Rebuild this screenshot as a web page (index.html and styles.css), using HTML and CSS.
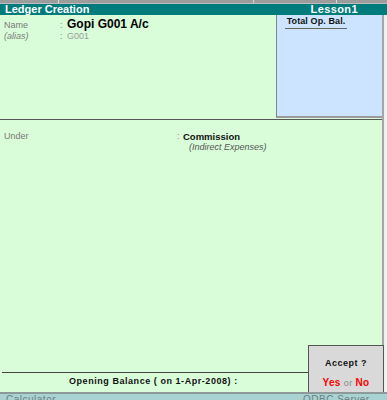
FILE: index.html
```html
<!DOCTYPE html>
<html>
<head>
<meta charset="utf-8">
<link rel="stylesheet" href="styles.css">
</head>
<body>
<div class="screen">
  <div class="topstrip"><span class="sep s1"></span><span class="sep s2"></span><span class="sep s3"></span></div>
  <div class="titlebar"><span>Ledger Creation</span><span class="company">Lesson1</span></div>
  <div class="main">
    <div class="content">
      <div class="upper">
        <div class="fields">
          <div class="row first"><span class="lbl">Name</span><span class="colon">:</span><span class="val-big">Gopi G001 A/c</span></div>
          <div class="row alias"><span class="lbl ital">(alias)</span><span class="colon">:</span><span class="val-gray">G001</span></div>
        </div>
        <div class="balpanel">
          <div class="balhead">Total Op. Bal.</div>
        </div>
      </div>
      <div class="divider"></div>
      <div class="under">
        <span class="lbl ulbl">Under</span>
        <span class="colon">:</span>
        <div class="group">
          <div class="gname">Commission</div>
          <div class="gparent">(Indirect Expenses)</div>
        </div>
      </div>
      <div class="spacer"></div>
      <div class="footer">
        <div class="footline"></div>
        <div class="opbal">Opening Balance ( on 1-Apr-2008) :</div>
      </div>
      <div class="accept">
        <div class="acc-q">Accept ?</div>
        <div class="acc-a"><span class="red">Yes</span> <span class="or">or</span> <span class="red">No</span></div>
      </div>
    </div>
    <div class="edge"></div>
  </div>
  <div class="bottomstrip"><span>Calculator</span><span class="odbc">ODBC Server</span></div>
</div>
</body>
</html>
```
FILE: styles.css
```css
* { box-sizing: border-box; }
html, body { margin: 0; padding: 0; }
body {
  width: 387px;
  height: 400px;
  overflow: hidden;
  font-family: "Liberation Sans", Arial, sans-serif;
  background: #ffffff;
}
.screen {
  width: 387px;
  height: 400px;
  display: flex;
  flex-direction: column;
}
.topstrip {
  height: 4px;
  background: #9c9c9c;
  position: relative;
  border-bottom: 1px solid #bdbdbd;
}
.sep { position: absolute; top: 0; width: 1px; height: 3px; background: #d8d8d8; }
.s1 { left: 58px; }
.s2 { left: 253px; }
.s3 { left: 336px; }
.titlebar {
  height: 11px;
  background: #007b7b;
  color: #ffffff;
  font-weight: bold;
  font-size: 11px;
  line-height: 11px;
  display: flex;
  justify-content: space-between;
  padding: 0 29px 0 5px;
}
.company { letter-spacing: 0.4px; }
.main {
  flex: 1;
  display: flex;
  min-height: 0;
}
.content {
  width: 382px;
  background: #d9fdd9;
  display: flex;
  flex-direction: column;
  position: relative;
}
.edge {
  width: 5px;
  border-left: 2px solid #a6a6a6;
  background: #eef2ee;
}
.upper {
  height: 103px;
  display: flex;
}
.fields {
  flex: 1;
  padding: 3px 0 0 4px;
}
.row {
  display: flex;
  align-items: baseline;
  height: 11px;
  line-height: 11px;
}
.first { height: 13px; line-height: 13px; }
.lbl {
  width: 56px;
  font-size: 9px;
  color: #7a7a7a;
}
.ital { font-style: italic; }
.colon {
  font-size: 9px;
  color: #8a8a8a;
  width: 7px;
}
.val-big {
  font-size: 12px;
  font-weight: bold;
  color: #000;
}
.val-gray {
  font-size: 9px;
  color: #9a9a9a;
}
.balpanel {
  width: 106px;
  background: #cce4ff;
  border-left: 1px solid #7a8a8a;
  border-bottom: 2px solid #9a9a9a;
  padding: 1px 0 0 8px;
}
.balhead {
  width: 62px;
  font-size: 9px;
  font-weight: bold;
  color: #111;
  text-align: center;
  white-space: nowrap;
  letter-spacing: 0.1px;
  line-height: 10px;
  padding-bottom: 2px;
  border-bottom: 1px solid #666;
}
.divider {
  margin-top: 1px;
  height: 1px;
  background: #555;
}
.under {
  display: flex;
  align-items: flex-start;
  padding: 11px 0 0 4px;
}
.ulbl { width: 173px; line-height: 11px; }
.under .colon { width: 6px; line-height: 11px; }
.gname {
  font-size: 9.5px;
  font-weight: bold;
  color: #111;
  line-height: 11px;
}
.gparent {
  font-size: 9px;
  font-style: italic;
  color: #555;
  padding-left: 6px;
  line-height: 11px;
}
.spacer { flex: 1; }
.footer {
  height: 20px;
}
.footline {
  width: 306px;
  margin-left: 2px;
  height: 1px;
  background: #444;
}
.opbal {
  padding-left: 69px;
  font-size: 9px;
  font-weight: bold;
  color: #111;
  letter-spacing: 0.55px;
  line-height: 10px;
  margin-top: 3px;
}
.accept {
  position: absolute;
  right: -2px;
  bottom: 0;
  width: 76px;
  height: 47px;
  background: #d9d9d9;
  border: 1px solid #555;
  border-bottom: none;
  text-align: center;
  font-size: 9px;
  font-weight: bold;
}
.acc-q {
  margin-top: 12px;
  color: #111;
  letter-spacing: 0.5px;
}
.acc-a {
  margin-top: 9px;
  letter-spacing: 0.4px;
}
.red { color: #ff0000; font-size: 10px; }
.or { color: #8a8a8a; font-weight: normal; }
.bottomstrip {
  height: 8px;
  border-top: 2px solid #8e9a9a;
  background: #a9d3d3;
  display: flex;
  justify-content: space-between;
  padding: 0 0 0 6px;
  font-size: 10px;
  line-height: 11px;
  color: #6b8080;
  overflow: hidden;
  letter-spacing: 0.5px;
}
.odbc { width: 84px; }
```
